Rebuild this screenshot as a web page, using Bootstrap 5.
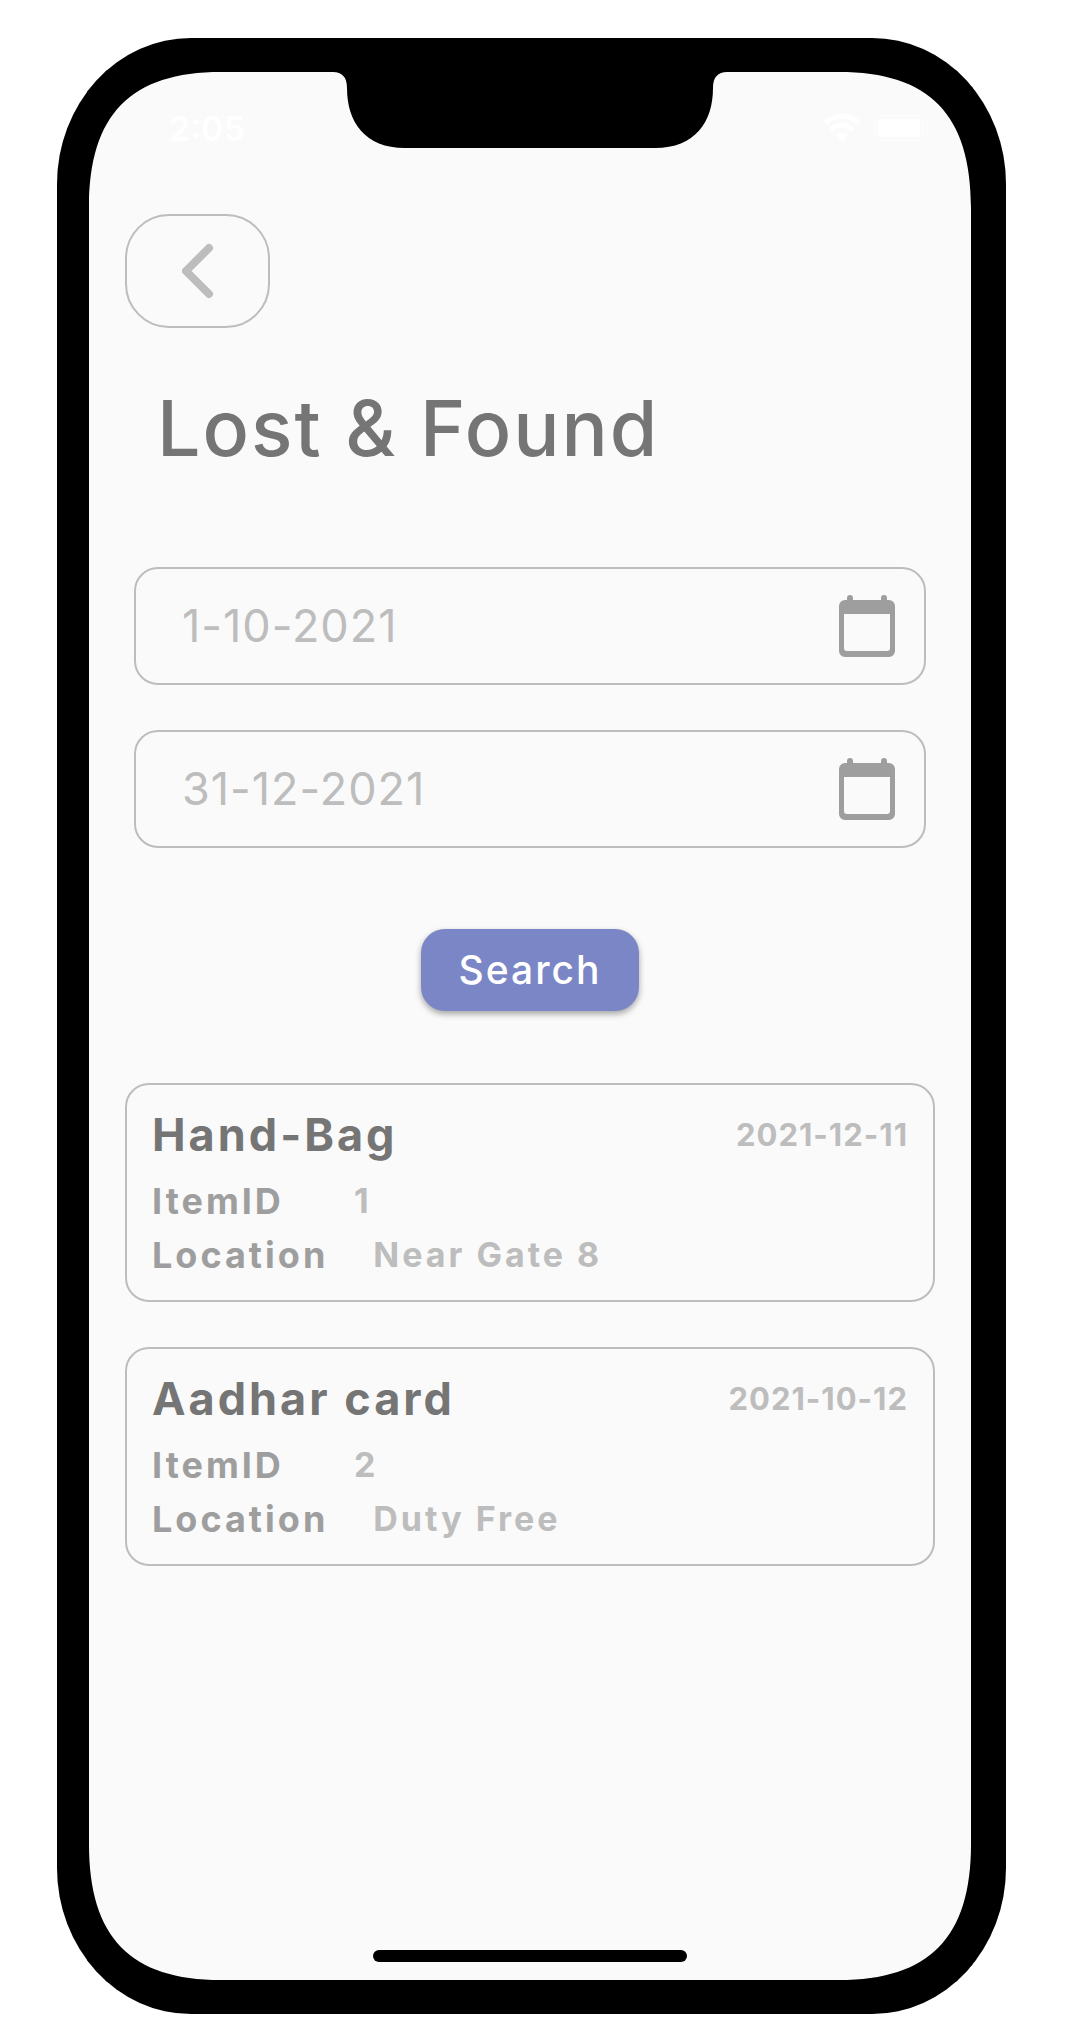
<!DOCTYPE html>
<html lang="en">
<head>
<meta charset="utf-8">
<meta name="viewport" content="width=device-width, initial-scale=1">
<title>Lost &amp; Found</title>
<link href="https://cdn.jsdelivr.net/npm/bootstrap@5.3.0/dist/css/bootstrap.min.css" rel="stylesheet">
<style>
  body { font-family: Inter, "Liberation Sans", sans-serif; background: #fff; }
  .stage { min-height: 100vh; padding: 38px 72px 24px 57px; }
  .device { background: #000; border-radius: 134px / 146px; padding: 34px 35px 34px 32px; overflow: hidden; }
  .screen { background: #fafafa; padding: 0 36px 18px; }
  .corner { position: absolute; width: 140px; height: 140px; }
  .corner-tl { top: 0; left: 0; }
  .corner-tr { top: 0; right: 0; transform: scaleX(-1); }
  .corner-bl { bottom: 0; left: 0; transform: scaleY(-1); }
  .corner-br { bottom: 0; right: 0; transform: scale(-1, -1); }
  .notch { position: absolute; top: 0; left: 50%; width: 394px; height: 76px; transform: translateX(-50%); }
  .statusbar { height: 142px; padding: 38px 5px 0 44px; color: #fff; }
  .clock { font-size: 34px; line-height: 38px; font-weight: 600; }
  .back-btn { width: 145px; height: 114px; border: 2px solid #bdbdbd; border-radius: 44px; }
  .page-title { font-size: 77px; line-height: 96px; font-weight: 500; color: #757575; margin: 52px 32px 91px; letter-spacing: 2px; }
  .search-form { padding: 0 9px; gap: 45px; }
  .date-box { height: 118px; border: 2px solid #bdbdbd; border-radius: 24px; padding: 0 28px 0 0; }
  .date-box .form-control { font-size: 45px; line-height: 56px; color: #bdbdbd; padding: 0 0 0 46px; letter-spacing: 1px; }
  .date-box .form-control:focus { box-shadow: none; }
  .search-btn { width: 218px; height: 82px; margin-top: 36px; border: 0; border-radius: 24px; background: #7b86c6; color: #fff;
    font-size: 39px; line-height: 46px; font-weight: 500; letter-spacing: 2px; box-shadow: 0 3px 6px rgba(0,0,0,.35); }
  .results { margin-top: 72px; gap: 45px; }
  .item-card { height: 219px; border: 2px solid #bdbdbd; border-radius: 24px; padding: 22px 25px 0; }
  .item-name { font-size: 45px; line-height: 56px; font-weight: 700; letter-spacing: 3px; color: #757575; }
  .item-date { font-size: 31px; line-height: 56px; font-weight: 700; letter-spacing: 1px; color: #bdbdbd; }
  .item-lines { margin-top: 11px; }
  .item-line { line-height: 54px; font-weight: 700; letter-spacing: 3px; }
  .item-key { font-size: 36px; color: #9e9e9e; }
  .item-value { font-size: 34px; color: #bdbdbd; }
  .gap-id { gap: 70px; }
  .gap-place { gap: 45px; }
  .home-bar { width: 314px; height: 12px; border-radius: 6px; background: #000; }
</style>
<script src="https://cdn.jsdelivr.net/npm/bootstrap@5.3.0/dist/js/bootstrap.bundle.min.js" defer></script>
</head>
<body>
<div class="stage d-flex">
  <div class="device d-flex flex-grow-1">
    <div class="screen position-relative d-flex flex-column flex-grow-1">
      <svg class="corner corner-tl" viewBox="0 0 140 140" overflow="visible" aria-hidden="true"><path id="bend" d="M-2-2H140V0H132C42 0 0 42 0 136V140H-2Z"/></svg>
      <svg class="corner corner-tr" viewBox="0 0 140 140" overflow="visible" aria-hidden="true"><use href="#bend"/></svg>
      <svg class="corner corner-bl" viewBox="0 0 140 140" overflow="visible" aria-hidden="true"><use href="#bend"/></svg>
      <svg class="corner corner-br" viewBox="0 0 140 140" overflow="visible" aria-hidden="true"><use href="#bend"/></svg>
      <svg class="notch" viewBox="0 0 394 76" aria-hidden="true"><path d="M0 0C9 0 14 5 14 16C14 50 32 76 72 76H322C362 76 380 50 380 16C380 5 385 0 394 0Z"/></svg>

      <header class="statusbar d-flex justify-content-between align-items-start">
        <span class="clock">2:05</span>
        <svg width="158" height="38" viewBox="0 0 158 38" fill="#fff" aria-hidden="true">
          <g opacity=".2"><circle cx="4" cy="27" r="3"/><circle cx="15" cy="27" r="3"/><circle cx="26" cy="27" r="3"/><circle cx="37" cy="27" r="3"/></g>
          <g fill="none" stroke="#fff" stroke-width="5"><path d="M53 13Q70-1 87 13"/><path d="M59 20Q70 10 81 20"/></g>
          <path d="M64 25Q70 20 76 25L70 31Z"/>
          <rect x="103" y="6" width="48" height="24" rx="7" fill="none" stroke="#fff" stroke-width="2" opacity=".4"/>
          <rect x="106" y="9" width="42" height="18" rx="4"/>
          <path d="M154 14Q158 18 154 22Z" opacity=".4"/>
        </svg>
      </header>

      <button type="button" class="back-btn btn p-0 d-flex align-items-center justify-content-center" aria-label="Back">
        <svg width="32" height="56" viewBox="0 0 32 56" fill="none" stroke="#bdbdbd" stroke-width="8" stroke-linecap="round" stroke-linejoin="round" aria-hidden="true"><path d="M27 5L4 28L27 51"/></svg>
      </button>

      <h1 class="page-title">Lost &amp; Found</h1>

      <form class="search-form d-flex flex-column">
        <div class="date-box d-flex align-items-center">
          <input class="form-control border-0 bg-transparent" type="text" value="1-10-2021" aria-label="From date">
          <svg class="flex-shrink-0" width="58" height="64" viewBox="0 0 58 64" fill="#9e9e9e" aria-hidden="true"><path fill-rule="evenodd" d="M9 6V4a3 3 0 0 1 6 0V6H43V4a3 3 0 0 1 6 0V6H51a6 6 0 0 1 6 6V57a6 6 0 0 1-6 6H7a6 6 0 0 1-6-6V12a6 6 0 0 1 6-6ZM6 20V54a3 3 0 0 0 3 3H49a3 3 0 0 0 3-3V20Z"/></svg>
        </div>
        <div class="date-box d-flex align-items-center">
          <input class="form-control border-0 bg-transparent" type="text" value="31-12-2021" aria-label="To date">
          <svg class="flex-shrink-0" width="58" height="64" viewBox="0 0 58 64" fill="#9e9e9e" aria-hidden="true"><path fill-rule="evenodd" d="M9 6V4a3 3 0 0 1 6 0V6H43V4a3 3 0 0 1 6 0V6H51a6 6 0 0 1 6 6V57a6 6 0 0 1-6 6H7a6 6 0 0 1-6-6V12a6 6 0 0 1 6-6ZM6 20V54a3 3 0 0 0 3 3H49a3 3 0 0 0 3-3V20Z"/></svg>
        </div>
        <button type="submit" class="search-btn btn p-0 align-self-center">Search</button>
      </form>

      <section class="results d-flex flex-column" aria-label="Items">
        <article class="item-card">
          <div class="d-flex justify-content-between">
            <h2 class="item-name m-0">Hand-Bag</h2>
            <time class="item-date" datetime="2021-12-11">2021-12-11</time>
          </div>
          <div class="item-lines">
            <div class="item-line gap-id d-flex"><span class="item-key">ItemID</span><span class="item-value">1</span></div>
            <div class="item-line gap-place d-flex"><span class="item-key">Location</span><span class="item-value">Near Gate 8</span></div>
          </div>
        </article>
        <article class="item-card">
          <div class="d-flex justify-content-between">
            <h2 class="item-name m-0">Aadhar card</h2>
            <time class="item-date" datetime="2021-10-12">2021-10-12</time>
          </div>
          <div class="item-lines">
            <div class="item-line gap-id d-flex"><span class="item-key">ItemID</span><span class="item-value">2</span></div>
            <div class="item-line gap-place d-flex"><span class="item-key">Location</span><span class="item-value">Duty Free</span></div>
          </div>
        </article>
      </section>

      <div class="home-bar mt-auto align-self-center"></div>
    </div>
  </div>
</div>
</body>
</html>
